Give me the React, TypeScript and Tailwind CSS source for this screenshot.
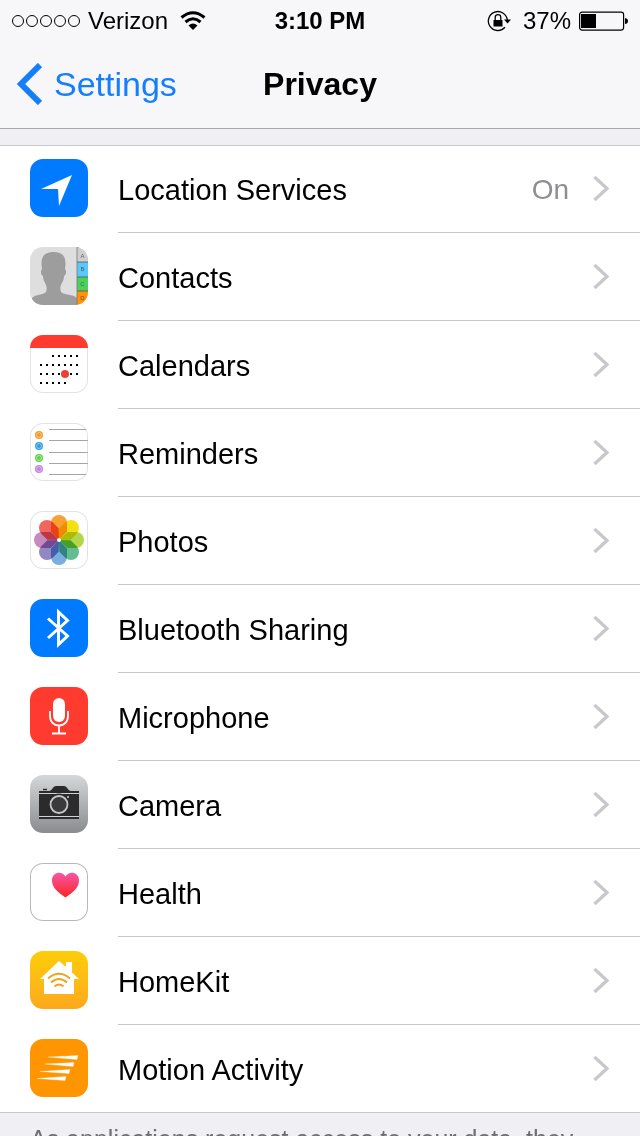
import type { ReactNode } from 'react';

type PrivacyItem = {
  label: string;
  icon: ReactNode;
  tile: string;
  value?: string;
};

const CALENDAR_ROWS = [
  { y: 21, xs: [23, 29, 35, 41, 47] },
  { y: 30, xs: [11, 17, 23, 29, 35, 41, 47] },
  { y: 39, xs: [11, 17, 23, 29, 35, 41, 47] },
  { y: 48, xs: [11, 17, 23, 29, 35] },
];

const CONTACT_TABS = [
  { letter: 'A', y: 0, fill: '#cfcfcf' },
  { letter: 'B', y: 15, fill: '#5ac8fa' },
  { letter: 'C', y: 30, fill: '#4cd15f' },
  { letter: 'D', y: 44, fill: '#ff9208' },
];

const REMINDER_DOTS = [
  { y: 12, fill: '#f59a22' },
  { y: 23, fill: '#2f9fe0' },
  { y: 35, fill: '#62d24b' },
  { y: 46, fill: '#c184e0' },
];

// Clockwise from the top petal.
const PETALS = ['#fa9f32', '#f2e013', '#b4d64a', '#64bd92', '#79aede', '#9488c4', '#c68bbd', '#f0665e'];

const items: PrivacyItem[] = [
  {
    label: 'Location Services',
    value: 'On',
    tile: 'bg-[#007aff]',
    icon: <path d="M42 16 11 30h17l1 17z" fill="#fff" />,
  },
  {
    label: 'Contacts',
    tile: 'bg-[#dedede]',
    icon: (
      <>
        <path
          d="M2 58v-7c4-4 11-3 14-6 1-3 1-6-1-9-1-2-2-4-2-7-2-1-3-5-1-7C10 10 14 5 23.500 5S37 10 35 22c2 2 1 6-1 7 0 3-1 5-2 7-2 3-2 6-1 9 3 3 12 2 16 6v7z"
          fill="#9d9d9d"
        />
        {CONTACT_TABS.map((tab) => (
          <g key={tab.letter}>
            <rect x="47" y={tab.y} width="11" height="15" fill={tab.fill} />
            <path d={`M47 ${tab.y}h11`} stroke="#555" strokeWidth="0.8" />
            <text
              x="52.500"
              y={tab.y + (tab.letter === 'A' ? 11 : 9)}
              fontSize="6"
              textAnchor="middle"
              fill="#333"
              opacity="0.7"
            >
              {tab.letter}
            </text>
          </g>
        ))}
        <path d="M47 0v58" stroke="#777" strokeWidth="0.8" />
      </>
    ),
  },
  {
    label: 'Calendars',
    tile: 'bg-white shadow-[inset_0_0_0_1px_#e3e3e3]',
    icon: (
      <>
        <path d="M0 0h58v13H0z" fill="#ff3b30" />
        {CALENDAR_ROWS.map((row) =>
          row.xs.map((x) => <rect key={`${x}-${row.y}`} x={x - 1} y={row.y - 1} width="2" height="2" />),
        )}
        <circle cx="35" cy="39" r="4" fill="#ee4136" />
      </>
    ),
  },
  {
    label: 'Reminders',
    tile: 'bg-white shadow-[inset_0_0_0_1px_#e3e3e3]',
    icon: (
      <>
        <path d="M19 6.500h38M19 17.500h39M19 29.500h39M19 40.500h39M19 51.500h38" stroke="#a5a5aa" />
        {REMINDER_DOTS.map((dot) => (
          <g key={dot.y}>
            <circle cx="9" cy={dot.y} r="4" fill={dot.fill} />
            <circle cx="9" cy={dot.y} r="2.500" fill="none" stroke="#fff" strokeWidth="0.6" opacity="0.7" />
          </g>
        ))}
      </>
    ),
  },
  {
    label: 'Photos',
    tile: 'bg-white shadow-[inset_0_0_0_1px_#e3e3e3]',
    icon: (
      <>
        {PETALS.map((fill, i) => (
          <path
            key={fill}
            d="M21 12a8 8 0 0 1 16 0v8.500L29 29l-8-8.500z"
            fill={fill}
            transform={`rotate(${i * 45} 29 29)`}
            className="mix-blend-multiply"
          />
        ))}
        <circle cx="29" cy="29" r="2" fill="#fff" />
      </>
    ),
  },
  {
    label: 'Bluetooth Sharing',
    tile: 'bg-[#007aff]',
    icon: <path d="m18 19.500 19.500 17.500-9 8.500V13l9 8.500L18 39" fill="none" stroke="#fff" strokeWidth="3" />,
  },
  {
    label: 'Microphone',
    tile: 'bg-[#ff3b30]',
    icon: (
      <>
        <rect x="23" y="11" width="12" height="24" rx="6" fill="#fff" />
        <path
          d="M20 24v5c0 6 4 9.500 9 9.500s9-3.500 9-9.500v-5M29 38v8M22 46.500h14"
          fill="none"
          stroke="#fff"
          strokeWidth="1.800"
        />
      </>
    ),
  },
  {
    label: 'Camera',
    tile: 'bg-linear-to-b from-[#d6d7d9] to-[#8b8c90]',
    icon: (
      <>
        <path d="M9 44V16h10c3 0 4-5 7-5h8c3 0 4 5 7 5h8v28z" fill="#2b2b2d" />
        <path d="M9 18.500h40M9 41.500h40" stroke="#d0d1d3" />
        <path d="M13 14.500h4" stroke="#2b2b2d" strokeWidth="1.500" />
        <circle cx="29" cy="29.500" r="11" fill="#2b2b2d" />
        <circle cx="29" cy="29.500" r="8.500" fill="#3a3a3c" stroke="#c4c5c7" strokeWidth="1.800" />
        <circle cx="38" cy="22" r="1" fill="#d0d1d3" />
      </>
    ),
  },
  {
    label: 'Health',
    tile: 'bg-white shadow-[inset_0_0_0_1px_#b9b9bd]',
    icon: (
      <>
        <defs>
          <linearGradient id="heart" x1="0" y1="0" x2="0" y2="1">
            <stop offset="0" stopColor="#f757a5" />
            <stop offset="1" stopColor="#fb2524" />
          </linearGradient>
        </defs>
        <path
          d="M35.500 34.500C28 29.500 22 24.500 22 17.500c0-9 10.500-10 13.500-4 3-6 13.500-5 13.500 4 0 7-6 12-13.500 17z"
          fill="url(#heart)"
        />
      </>
    ),
  },
  {
    label: 'HomeKit',
    tile: 'bg-linear-to-b from-[#fecd08] to-[#fca91c]',
    icon: (
      <>
        <path d="m29 10 7 6v-5h6v10.500l7 6.500h-5v15H14V28h-4z" fill="#fff" />
        <path
          d="M18 27.500q11-9.500 22 0M21 31.500q8-7 16 0M24.500 35.500q4.500-4 9 0"
          fill="none"
          stroke="#eda51b"
          strokeWidth="1.800"
        />
      </>
    ),
  },
  {
    label: 'Motion Activity',
    tile: 'bg-[#ff9500]',
    icon: (
      <path
        d="m18 18 30-1.500-1 4zM15 25l29-1.500-1 4zM10 32.500l30-2-1 4zM7 39.500l29-2-1 4z"
        fill="#fff"
        stroke="#fff"
        strokeWidth="0.3"
      />
    ),
  },
];

function StatusBar() {
  return (
    <div className="grid h-10 grid-cols-[1fr_auto_1fr] items-center px-3 pt-0.5 text-2xl">
      <div className="flex items-center gap-2">
        <svg width="68" height="12" viewBox="0 0 68 12" fill="none" stroke="#000" aria-hidden="true">
          {[6, 20, 34, 48, 62].map((cx) => (
            <circle key={cx} cx={cx} cy="6" r="5.500" />
          ))}
        </svg>
        <span>Verizon</span>
        <svg className="ml-1" width="26" height="20" viewBox="0 0 26 20" fill="none" stroke="#000" aria-label="Wi-Fi">
          <path d="M1.500 6.500q11.500-9.500 23 0M5.500 11q7.500-6.500 15 0" strokeWidth="3" />
          <path d="M8.500 14.500q4.500-4 9 0L13 19z" fill="#000" stroke="none" />
        </svg>
      </div>
      <time className="font-bold">3:10 PM</time>
      <div className="flex items-center justify-end gap-2">
        <svg className="mr-1" width="24" height="22" viewBox="0 0 24 22" fill="none" stroke="#000" aria-label="Rotation lock">
          <path d="M20.300 10A9.500 9.500 0 1 0 18 17.300" strokeWidth="1.300" />
          <path d="M17 9.500h7l-3.500 4z" fill="#000" stroke="none" />
          <rect x="6.500" y="10" width="9" height="6.500" fill="#000" stroke="none" />
          <path d="M8.200 10V7.500a2.800 2.800 0 0 1 5.600 0V10" strokeWidth="1.300" />
        </svg>
        <span>37%</span>
        <svg width="49" height="20" viewBox="0 0 49 20" aria-label="Battery">
          <rect x="0.600" y="1.100" width="44" height="18" rx="2.500" fill="none" stroke="#000" strokeWidth="1.200" />
          <rect x="2" y="3" width="15" height="14" />
          <path d="M46 7q3 .5 3 3t-3 3z" />
        </svg>
      </div>
    </div>
  );
}

function NavBar() {
  return (
    <nav className="grid h-22 grid-cols-[1fr_auto_1fr] items-center px-4">
      <a href="#settings" className="flex items-center gap-3 text-[34px] leading-10 text-[#157efb]">
        <svg width="26" height="42" viewBox="0 0 26 42" fill="none" stroke="currentColor" strokeWidth="6" aria-hidden="true">
          <path d="M24 2 5 21l19 19" />
        </svg>
        Settings
      </a>
      <h1 className="text-[32px] leading-10 font-bold">Privacy</h1>
    </nav>
  );
}

function PrivacyRow({ item, last }: { item: PrivacyItem; last: boolean }) {
  return (
    <li className={last ? 'border-b border-[#c8c7cc]' : ''}>
      <a href={`#${item.label.toLowerCase().replace(' ', '-')}`} className="flex items-stretch gap-[30px] pl-[30px]">
        <span className={`my-3.5 size-[58px] shrink-0 overflow-hidden rounded-[13px] ${item.tile}`}>
          <svg className="size-full" viewBox="0 0 58 58" aria-hidden="true">
            {item.icon}
          </svg>
        </span>
        <span
          className={`box-content flex h-[87px] flex-1 items-center pr-[30px] text-[29px] leading-9 ${
            last ? '' : 'border-b border-[#c8c7cc]'
          }`}
        >
          <span className="flex-1 pt-0.5">{item.label}</span>
          {item.value && <span className="mr-6 pt-0.5 text-[28px] text-[#8e8e93]">{item.value}</span>}
          <svg width="17" height="26" viewBox="0 0 17 26" fill="none" stroke="#c7c7cc" strokeWidth="3.200" aria-hidden="true">
            <path d="m1.500 1 12.500 11.500L1.500 24" />
          </svg>
        </span>
      </a>
    </li>
  );
}

export default function App() {
  return (
    <div className="flex h-dvh flex-col bg-[#efeff4] font-['Liberation_Sans',Arial,sans-serif] text-black">
      <header className="shrink-0 border-b border-[#a7a7ac] bg-[#f7f7f9]">
        <StatusBar />
        <NavBar />
      </header>
      <main className="min-h-0 flex-1 overflow-y-auto pt-4 [scrollbar-width:none]">
        <ul className="bg-white shadow-[inset_0_1px_0_#c8c7cc]">
          {items.map((item, i) => (
            <PrivacyRow key={item.label} item={item} last={i === items.length - 1} />
          ))}
        </ul>
        <p className="px-[30px] pt-2.5 text-[25px] leading-8 text-[#6d6d72]">
          As applications request access to your data, they
        </p>
      </main>
    </div>
  );
}
